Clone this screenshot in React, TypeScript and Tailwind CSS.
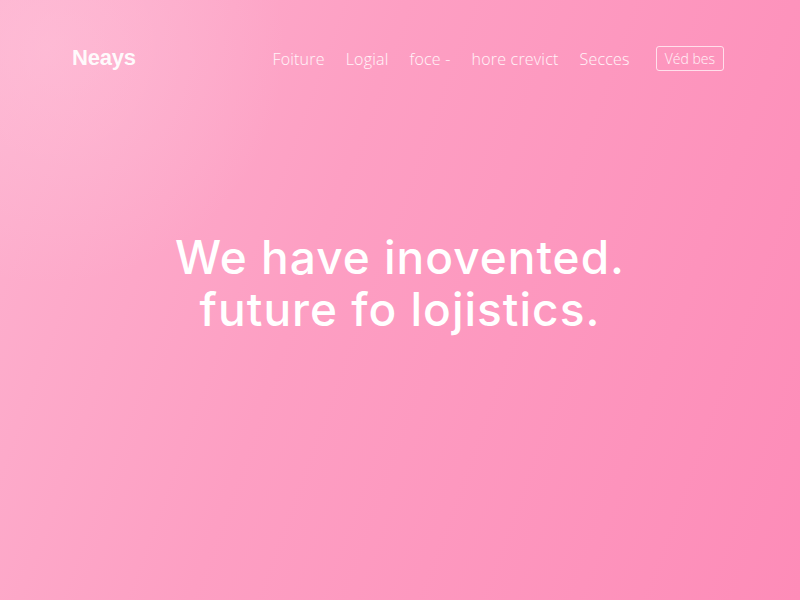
export default function App() {
  const links = ['Foiture', 'Logial', 'foce -', 'hore crevict', 'Secces']

  return (
    <div className="relative h-[600px] w-[800px] overflow-hidden bg-[linear-gradient(110deg,#fdb2cf_0%,#fd9fc3_40%,#fd8cb8_100%)] font-['Open_Sans',sans-serif] text-white">
      <div className="pointer-events-none absolute -left-48 -top-48 h-[480px] w-[480px] rounded-full bg-[radial-gradient(circle,rgba(255,200,222,0.45)_0%,rgba(255,200,222,0)_70%)]" />

      {/* Header */}
      <header className="relative flex h-[116px] items-center justify-between pl-[72px] pr-[76px] pb-[2px]">
        <div className="font-['Liberation_Sans',sans-serif] text-[22px] font-bold tracking-[-0.2px] text-white/95">Neays</div>
        <nav className="mt-[3px] flex items-center">
          <ul className="flex items-center gap-[21px] text-[16px] font-light tracking-[0.2px] text-white/90">
            {links.map((l) => (
              <li key={l}>{l}</li>
            ))}
          </ul>
          <button className="ml-[26px] h-[25px] rounded-[3px] border border-white/70 px-[8px] text-[14px] font-light text-white/90">
            Véd bes
          </button>
        </nav>
      </header>

      {/* Hero */}
      <main className="relative flex justify-center pt-[115px]">
        <h1 className="flex flex-col items-center font-['Inter',sans-serif] text-[46px] font-medium leading-[52px] tracking-[1px] text-white">
          <span>We have inovented.</span>
          <span>future fo lojistics.</span>
        </h1>
      </main>
    </div>
  )
}
